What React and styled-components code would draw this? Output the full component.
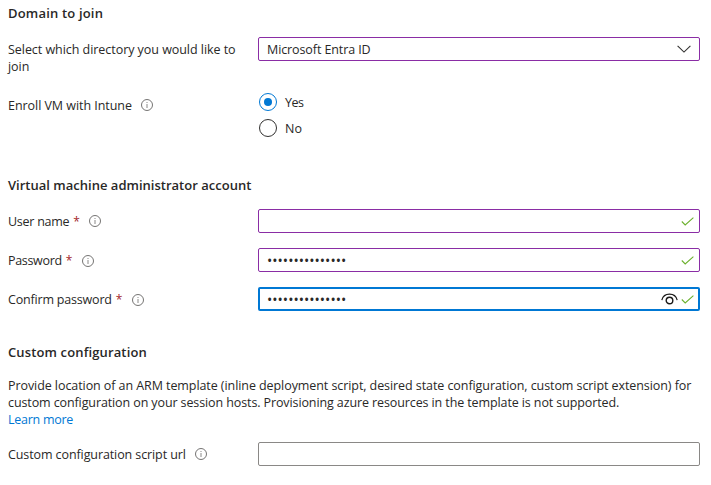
import React from "react";
import styled, { createGlobalStyle } from "styled-components";

const GlobalStyle = createGlobalStyle`
  *, *::before, *::after { box-sizing: border-box; }
  body {
    margin: 0;
    background: #fff;
    color: #292827;
    font: 12.5px/17px "Open Sans", "Noto Sans", sans-serif;
  }
`;

const Page = styled.main`
  width: 711px;
  height: 485px;
  padding: 4px 11px 0 8px;
  overflow: hidden;
`;

const Section = styled.section`
  margin-bottom: ${(p) => p.$after || 0}px;
`;

const Heading = styled.h2`
  margin: 0 0 ${(p) => p.$after || 15}px;
  font-size: 13px;
  font-weight: 600;
  line-height: 18px;
  letter-spacing: ${(p) => p.$tracking || 0}px;
`;

const Field = styled.div`
  display: grid;
  grid-template-columns: 250px 442px;
  align-items: start;
  margin-top: ${(p) => p.$gap || 0}px;
`;

const Label = styled.div`
  display: flex;
  align-items: flex-start;
  padding-top: 4px;
`;

const Text = styled.span`
  max-width: 240px;
  letter-spacing: ${(p) => p.$tracking || 0}px;
`;

const Required = styled.span`
  margin-left: 4px;
  width: 7px;
  color: #a4262c;
  font-size: 12px;
`;

const InfoSvg = styled.svg`
  flex: none;
  margin: ${(p) => (p.$low ? 3 : 2)}px 0 0 9px;
`;

const Box = styled.div`
  display: flex;
  align-items: center;
  height: 24px;
  padding: 0 ${(p) => (p.$focused ? 4 : 5)}px 0 ${(p) => (p.$focused ? 7 : 8)}px;
  border: ${(p) => (p.$focused ? 2 : 1)}px solid ${(p) => p.$color};
  border-radius: 2px;
  background: #fff;
`;

const Select = styled(Box)`
  padding-right: 8px;
`;

const Grow = styled.span`
  flex: 1;
  letter-spacing: ${(p) => p.$tracking || 0}px;
`;

const Masked = styled(Grow)`
  padding-top: 1px;
  font-size: 14px;
  letter-spacing: 0.02px;
`;

const Radios = styled.div`
  display: flex;
  flex-direction: column;
  gap: 8px;
  padding-left: 1px;
`;

const Option = styled.div`
  display: flex;
  align-items: center;
  gap: 8px;
  height: 18px;
`;

const Dot = styled.span`
  display: flex;
  align-items: center;
  justify-content: center;
  width: 18px;
  height: 18px;
  border: 1px solid ${(p) => (p.$on ? "#0078d4" : "#323130")};
  border-radius: 50%;

  &::after {
    content: "";
    width: 8px;
    height: 8px;
    border-radius: 50%;
    background: ${(p) => (p.$on ? "#0078d4" : "transparent")};
  }
`;

const Paragraph = styled.p`
  margin: 0 0 14px;
  white-space: nowrap;
`;

const Line = styled.span`
  display: block;
  letter-spacing: ${(p) => p.$tracking}px;
`;

const Link = styled.a`
  color: #0078d4;
  letter-spacing: -0.27px;
`;

const Info = ({ low }) => (
  <InfoSvg $low={low} width="12" height="12" viewBox="0 0 12 12" fill="none">
    <circle cx="6" cy="6" r="5.5" stroke="#6e6d6b" strokeWidth="0.95" />
    <path d="M6 5v4" stroke="#8a8988" />
    <path d="M6 3v1" stroke="#8a8988" />
  </InfoSvg>
);

const Chevron = () => (
  <svg width="14" height="8" viewBox="0 0 14 8" fill="none">
    <path d="M.6.8 7 7.1 13.4.8" stroke="#323130" strokeWidth="1.1" />
  </svg>
);

const Check = () => (
  <svg width="13" height="9" viewBox="0 0 13 9" fill="none">
    <path d="M.8 4.5 4.200 7.900 12.400.7" stroke="#6bb02c" strokeWidth="1.100" />
  </svg>
);

const EyeSvg = styled.svg`
  margin-right: 3px;
`;

const Eye = () => (
  <EyeSvg width="17" height="12" viewBox="0 0 17 12" fill="none" stroke="#1b1a19">
    <path d="M.8 7.2C1.8 3.2 4.8 1.2 8.5 1.2s6.7 2 7.7 6" strokeWidth="1.2" />
    <circle cx="8.5" cy="7.5" r="3.3" strokeWidth="1.4" />
  </EyeSvg>
);

const FieldLabel = ({ children, tracking, required, info, low }) => (
  <Label>
    <Text $tracking={tracking}>{children}</Text>
    {required && <Required>*</Required>}
    {info && <Info low={low} />}
  </Label>
);

const bullets = "•".repeat(15);

export default function App() {
  return (
    <>
      <GlobalStyle />
      <Page>
        <Section $after={39}>
          <Heading $tracking={0.18}>Domain to join</Heading>
          <Field>
            <FieldLabel tracking={-0.045}>Select which directory you would like to join</FieldLabel>
            <Select $color="#8a2da5">
              <Grow $tracking={-0.1}>Microsoft Entra ID</Grow>
              <Chevron />
            </Select>
          </Field>
          <Field $gap={18}>
            <FieldLabel info tracking={-0.05}>Enroll VM with Intune</FieldLabel>
            <Radios>
              <Option><Dot $on /><Text $tracking={-0.5}>Yes</Text></Option>
              <Option><Dot /><Text>No</Text></Option>
            </Radios>
          </Field>
        </Section>

        <Section $after={32}>
          <Heading $tracking={0.01}>Virtual machine administrator account</Heading>
          <Field>
            <FieldLabel required info tracking={-0.26}>User name</FieldLabel>
            <Box $color="#8a2da5"><Grow /><Check /></Box>
          </Field>
          <Field $gap={15}>
            <FieldLabel required info low tracking={-0.32}>Password</FieldLabel>
            <Box $color="#8a2da5"><Masked>{bullets}</Masked><Check /></Box>
          </Field>
          <Field $gap={15}>
            <FieldLabel required info low tracking={-0.19}>Confirm password</FieldLabel>
            <Box $focused $color="#0078d4"><Masked>{bullets}</Masked><Eye /><Check /></Box>
          </Field>
        </Section>

        <Section>
          <Heading $after={16} $tracking={0.13}>Custom configuration</Heading>
          <Paragraph>
            <Line $tracking={-0.075}>Provide location of an ARM template (inline deployment script, desired state configuration, custom script extension) for</Line>
            <Line $tracking={-0.108}>custom configuration on your session hosts. Provisioning azure resources in the template is not supported.</Line>
            <Link>Learn more</Link>
          </Paragraph>
          <Field>
            <FieldLabel info tracking={-0.1}>Custom configuration script url</FieldLabel>
            <Box $color="#8a8886" />
          </Field>
        </Section>
      </Page>
    </>
  );
}
